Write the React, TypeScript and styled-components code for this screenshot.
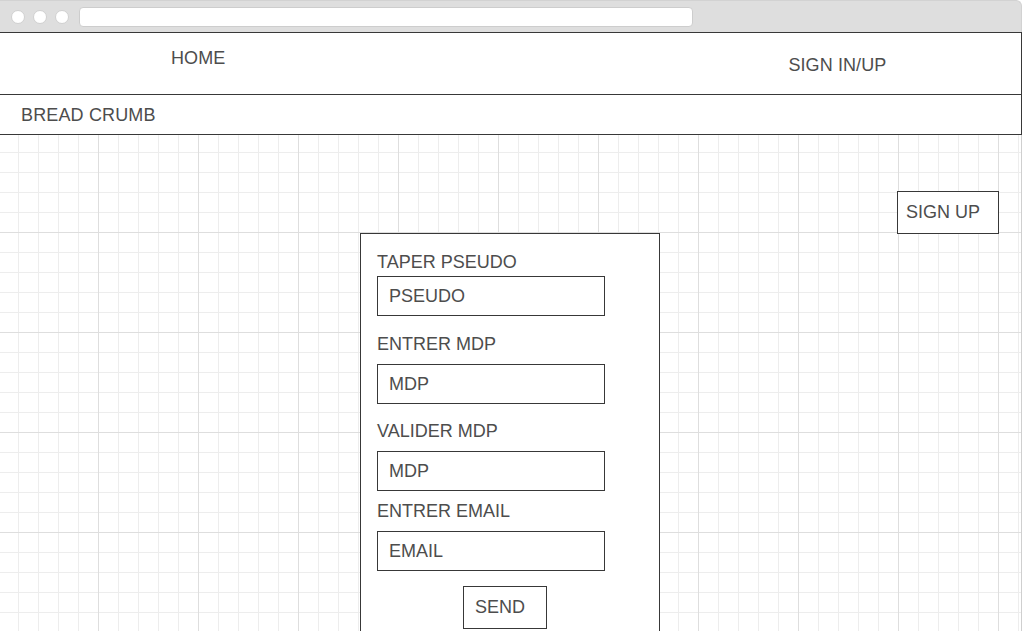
import React from "react";
import styled, { createGlobalStyle } from "styled-components";

const Global = createGlobalStyle`
  html, body { margin: 0; padding: 0; }
  body {
    width: 1022px;
    height: 631px;
    overflow: hidden;
    background: #ffffff;
    font-family: "Liberation Sans", Arial, sans-serif;
    color: #4d4d4d;
  }
`;

const Page = styled.div`
  display: flex;
  flex-direction: column;
  width: 1022px;
  height: 631px;
  overflow: hidden;
`;

const Chrome = styled.div`
  flex-shrink: 0;
  display: flex;
  align-items: center;
  gap: 8px;
  height: 32px;
  padding: 0 0 0 11px;
  box-sizing: border-box;
  background: #dedede;
  border-top: 1px solid #d2d2d2;
  border-right: 1px solid #d2d2d2;
  border-radius: 0 6px 0 0;
`;

const Dot = styled.span`
  width: 14px;
  height: 14px;
  border-radius: 50%;
  background: #ffffff;
  border: 1px solid #d0d0d0;
  box-sizing: border-box;
`;

const Address = styled.div`
  width: 614px;
  height: 20px;
  margin-left: 2px;
  margin-top: 1px;
  background: #ffffff;
  border: 1px solid #cdcdcd;
  border-radius: 4px;
  box-sizing: border-box;
`;

const Header = styled.header`
  flex-shrink: 0;
  display: flex;
  align-items: flex-start;
  height: 63px;
  box-sizing: border-box;
  border-top: 1px solid #383838;
  border-bottom: 1px solid #383838;
  border-right: 1px solid #383838;
`;

const NavItem = styled.a<{ $left: number; $top: number }>`
  display: block;
  margin-left: ${(p) => p.$left}px;
  margin-top: ${(p) => p.$top}px;
  font-size: 18px;
  line-height: 20px;
  letter-spacing: 0.1px;
  color: #4d4d4d;
  text-decoration: none;
  white-space: nowrap;
`;

const Crumbs = styled.nav`
  flex-shrink: 0;
  display: flex;
  align-items: center;
  height: 40px;
  box-sizing: border-box;
  padding-left: 21px;
  border-bottom: 1px solid #383838;
  border-right: 1px solid #383838;
  font-size: 18px;
  line-height: 20px;
  letter-spacing: 0.15px;
`;

const Canvas = styled.main`
  flex: 1;
  min-height: 0;
  display: flex;
  flex-direction: column;
  align-items: flex-start;
  padding-top: 56px;
  box-sizing: border-box;
  border-right: 1px solid #cfcfcf;
  background-color: #ffffff;
  background-image:
    linear-gradient(to right, transparent 99px, #dedede 99px),
    linear-gradient(to bottom, transparent 99px, #dedede 99px),
    linear-gradient(to right, transparent 19px, #ededed 19px),
    linear-gradient(to bottom, transparent 19px, #ededed 19px);
  background-size: 100px 100px, 100px 100px, 20px 20px, 20px 20px;
  background-position: -1px -2px, -1px -2px, -1px -2px, -1px -2px;
`;

const SignUp = styled.button`
  flex-shrink: 0;
  align-self: flex-end;
  width: 102px;
  height: 43px;
  margin-right: 22px;
  margin-bottom: -1px;
  padding: 0 0 0 8px;
  text-align: left;
  background: #ffffff;
  border: 1px solid #383838;
  font-family: inherit;
  font-size: 18px;
  color: #4d4d4d;
  cursor: pointer;
`;

const Form = styled.form`
  flex-shrink: 0;
  display: flex;
  flex-direction: column;
  align-items: flex-start;
  width: 300px;
  margin-left: 360px;
  padding: 18px 16px 30px;
  box-sizing: border-box;
  background: #ffffff;
  border: 1px solid #383838;
`;

const Label = styled.label<{ $gap: number }>`
  display: block;
  margin-top: ${(p) => p.$gap}px;
  font-size: 18px;
  line-height: 20px;
  color: #4d4d4d;
  white-space: nowrap;
`;

const Field = styled.div<{ $gap: number }>`
  flex-shrink: 0;
  display: flex;
  align-items: center;
  width: 228px;
  height: 40px;
  margin-top: ${(p) => p.$gap}px;
  padding-left: 11px;
  box-sizing: border-box;
  background: #ffffff;
  border: 1px solid #383838;
  font-size: 18px;
  color: #4d4d4d;
`;

const Send = styled.button`
  flex-shrink: 0;
  width: 84px;
  height: 43px;
  margin-top: 15px;
  margin-left: 86px;
  padding: 0 0 0 11px;
  text-align: left;
  background: #ffffff;
  border: 1px solid #383838;
  font-family: inherit;
  font-size: 18px;
  color: #4d4d4d;
  cursor: pointer;
`;

const fields = [
  { label: "TAPER PSEUDO", value: "PSEUDO", labelGap: 0, fieldGap: 4 },
  { label: "ENTRER MDP", value: "MDP", labelGap: 18, fieldGap: 10 },
  { label: "VALIDER MDP", value: "MDP", labelGap: 17, fieldGap: 10 },
  { label: "ENTRER EMAIL", value: "EMAIL", labelGap: 10, fieldGap: 10 },
];

export default function App() {
  return (
    <Page>
      <Global />
      <Chrome>
        <Dot />
        <Dot />
        <Dot />
        <Address />
      </Chrome>
      <Header>
        <NavItem href="#" $left={171} $top={15}>
          HOME
        </NavItem>
        <NavItem href="#" $left={563} $top={22}>
          SIGN IN/UP
        </NavItem>
      </Header>
      <Crumbs>BREAD CRUMB</Crumbs>
      <Canvas>
        <SignUp type="button">SIGN UP</SignUp>
        <Form onSubmit={(e) => e.preventDefault()}>
          {fields.map((f) => (
            <React.Fragment key={f.label}>
              <Label $gap={f.labelGap}>{f.label}</Label>
              <Field $gap={f.fieldGap}>{f.value}</Field>
            </React.Fragment>
          ))}
          <Send type="submit">SEND</Send>
        </Form>
      </Canvas>
    </Page>
  );
}
